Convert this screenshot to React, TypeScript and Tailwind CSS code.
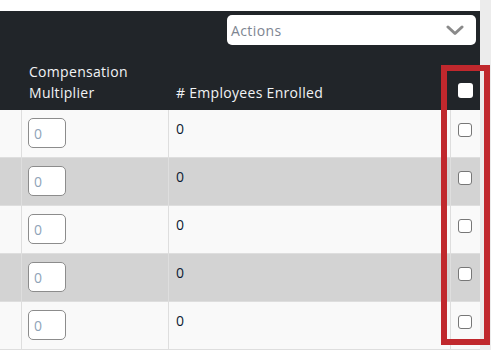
const rows = [
  { mult: "0", enrolled: "0" },
  { mult: "0", enrolled: "0" },
  { mult: "0", enrolled: "0" },
  { mult: "0", enrolled: "0" },
  { mult: "0", enrolled: "0" },
]

export default function App() {
  return (
    <div className="relative flex w-[491px] h-[350px] overflow-hidden bg-white font-['Open_Sans',sans-serif]">
      <div className="w-[480px] flex flex-col">
        <div className="h-[11px] bg-white" />
        <div className="h-[99px] bg-[#212529] flex flex-col">
          <div className="flex justify-end pt-[4px] pr-[4px]">
            <div className="w-[249px] h-[30px] bg-white rounded-[5px] flex items-center justify-between pl-[4px] pr-[12px]">
              <span className="text-[14px] text-[#7d8591] tracking-[0.4px]">Actions</span>
              <svg width="18" height="11" viewBox="0 0 18 11" fill="none">
                <polyline points="2,2 9,8.5 16,2" stroke="#8a8a8a" strokeWidth="3" strokeLinecap="round" strokeLinejoin="round" />
              </svg>
            </div>
          </div>
          <div className="grid grid-cols-[22px_147px_282px_29px] mt-[16px] text-[14px] font-medium text-[#f1f3f5] leading-[21px] tracking-[0.3px]">
            <div />
            <div className="pl-[7px]">
              Compensation
              <br />
              Multiplier
            </div>
            <div className="pl-[7px] flex items-end">
              # Employees Enrolled
            </div>
            <div className="pt-[22px] pl-[7px]">
              <div className="w-[15px] h-[15px] bg-white rounded-[3px]" />
            </div>
          </div>
        </div>
        {rows.map((r, i) => (
          <div
            key={i}
            className={`grid grid-cols-[22px_147px_282px_29px] h-[48px] border-b border-[#dedede] ${i % 2 === 1 ? "bg-[#d3d3d3]" : "bg-[#f9f9f9]"}`}
          >
            <div className="border-r border-[#dedede]" />
            <div className="border-r border-[#dedede] pl-[6px] pt-[8px]">
              <div className="w-[38px] h-[30px] bg-white border border-[#8c8c8c] rounded-[5px] flex items-center pl-[5px] text-[14px] text-[#8fa3b8]">
                {r.mult}
              </div>
            </div>
            <div className="border-r border-[#dedede] pl-[7px] pt-[8px] text-[14px] text-[#0d1b33]">
              {r.enrolled}
            </div>
            <div className="pl-[7px] pt-[13px]">
              <div className="w-[14px] h-[14px] bg-white border border-[#777] rounded-[3px]" />
            </div>
          </div>
        ))}
      </div>
      <div className="w-[11px] bg-[#ececec]" />
      <div className="absolute left-[441px] top-[65px] w-[49px] h-[280px] border-[6px] border-[#c0282d]" />
    </div>
  )
}
